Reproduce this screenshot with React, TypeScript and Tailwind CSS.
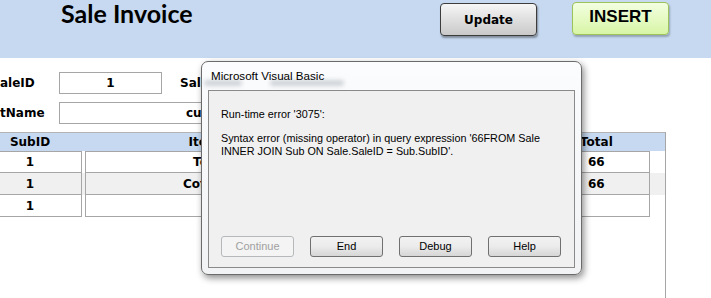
export default function App() {
  const rows = [
    { sub: "1", item: "Tea", total: "66" },
    { sub: "1", item: "Coffee", total: "66" },
    { sub: "1", item: "", total: "" },
  ];

  return (
    <div className="relative w-[711px] h-[298px] overflow-hidden bg-white flex flex-col font-['DejaVu_Sans',sans-serif]">
      {/* header band */}
      <div className="h-[58px] bg-[#c6d9f0] flex items-start shrink-0">
        <h1 className="ml-[61px] w-[379px] pt-[1px] font-['Lato',sans-serif] font-bold text-[25px] leading-[24px] text-black">
          Sale Invoice
        </h1>
        <button className="mt-[3px] w-[97px] h-[33px] rounded-[4px] border border-[#3c3c3c] bg-gradient-to-b from-[#f6f6f6] to-[#c9c9c9] shadow-[1px_2px_2px_rgba(0,0,0,0.35)] text-[12px] font-bold text-black">
          Update
        </button>
        <button className="ml-[35px] mt-[2px] w-[97px] h-[33px] rounded-[4px] border border-[#9cc35c] bg-gradient-to-b from-[#f3ffe0] to-[#d8f5a6] shadow-[1px_2px_2px_rgba(0,0,0,0.25)] pb-[4px] font-['Liberation_Sans',sans-serif] text-[17px] font-bold text-black">
          INSERT
        </button>
      </div>

      {/* form fields */}
      <div className="pt-[14px] text-[12px] font-bold text-black">
        <div className="flex items-center h-[22px]">
          <span className="w-[59px]">aleID</span>
          <div className="w-[103px] h-[22px] border border-[#a6a6a6] flex items-center justify-center">1</div>
          <span className="ml-[18px]">Sal</span>
        </div>
        <div className="flex items-center h-[22px] mt-[8px]">
          <span className="w-[59px]">tName</span>
          <div className="w-[300px] h-[22px] border border-[#a6a6a6] flex items-center pl-[126px]">cu</div>
        </div>
      </div>

      {/* items table */}
      <div className="mt-[8px] w-[666px] flex-1 border-r border-[#a6a6a6] text-[12px] font-bold text-black">
        <div className="h-[19px] bg-[#c6d9f0] border-t border-[#b4b4b4] flex items-center">
          <div className="w-[81px] pr-[21px] text-center">SubID</div>
          <div className="ml-[4px] w-[238px] text-center">Item</div>
          <div className="ml-[247px] w-[77px] pl-[10px]">Total</div>
        </div>
        {rows.map((r, i) => (
          <div key={i} className={`h-[22px] flex ${i === 1 ? "bg-[#f0f0f0]" : ""}`}>
            <div className={`w-[82px] pr-[21px] border-r border-b border-[#a6a6a6] flex items-center justify-center ${i === 0 ? "border-t" : ""}`}>
              {r.sub}
            </div>
            <div className={`ml-[3px] w-[239px] border-x border-b border-[#a6a6a6] flex items-center justify-center ${i === 0 ? "border-t" : ""}`}>
              {r.item}
            </div>
            <div className={`ml-[247px] w-[79px] border-x border-b border-[#a6a6a6] flex items-center pl-[16px] ${i === 0 ? "border-t" : ""}`}>
              {r.total}
            </div>
          </div>
        ))}
      </div>

      {/* error dialog */}
      <div className="absolute left-[201px] top-[61px] w-[381px] h-[214px] rounded-[7px] border border-[#6b6b6b] bg-gradient-to-b from-[#fbfcfd] to-[#f1f3f5] shadow-[2px_3px_7px_rgba(0,0,0,0.45)] flex flex-col px-[6px] pb-[6px] font-['Liberation_Sans',sans-serif] text-black">
        {/* glass blur of what lies behind the title bar */}
        <div className="absolute left-[2px] top-[18px] w-[38px] h-[6px] rounded-full bg-[#cfd3d8] blur-[2px]" />
        <div className="absolute left-[68px] top-[18px] w-[74px] h-[6px] rounded-full bg-[#cfd3d8] blur-[2px]" />
        <div className="relative h-[28px] flex items-center pl-[3px] text-[11.6px]">Microsoft Visual Basic</div>
        <div className="relative flex-1 border border-[#8a8a8a] bg-[#f0f0f0] flex flex-col pl-[12px] pt-[16px] pb-[10px] text-[10.8px]">
          <p className="leading-[14px]">Run-time error '3075':</p>
          <p className="mt-[11px] leading-[13px]">
            Syntax error (missing operator) in query expression '66FROM Sale
            <br />
            INNER JOIN Sub ON Sale.SaleID = Sub.SubID'.
          </p>
          <div className="mt-auto flex gap-[16px]">
            <button className="w-[73px] h-[21px] rounded-[3px] border border-[#b5b9bc] bg-[#f4f4f4] text-[11px] text-[#a0a0a0]">
              Continue
            </button>
            {["End", "Debug", "Help"].map((b) => (
              <button
                key={b}
                className="w-[73px] h-[21px] rounded-[3px] border border-[#707070] bg-gradient-to-b from-[#f2f2f2] via-[#ebebeb] to-[#d6d6d6] text-[11px] text-black"
              >
                {b}
              </button>
            ))}
          </div>
        </div>
      </div>
    </div>
  );
}
